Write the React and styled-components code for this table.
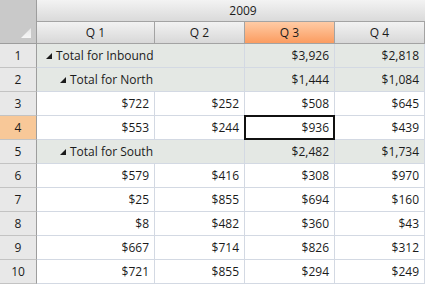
import React from "react";
import styled, { createGlobalStyle, css } from "styled-components";

const Global = createGlobalStyle`
  html, body { margin: 0; padding: 0; background: #ffffff; }
  body { font-family: "Open Sans", "Noto Sans", "Liberation Sans", sans-serif; }
`;

const Grid = styled.div`
  display: grid;
  grid-template-columns: 37px 118px 90px 90px 90px;
  grid-template-rows: 22px 22px repeat(10, 24px);
  width: 425px;
  height: 284px;
  overflow: hidden;
  font-size: 12px;
  color: #1b1b1b;
`;

const Corner = styled.div`
  grid-row: 1 / span 2;
  grid-column: 1;
  background: #c9c9c9;
  border-right: 1px solid #9d9d9d;
  border-bottom: 1px solid #9d9d9d;
  display: flex;
  align-items: flex-end;
  justify-content: flex-end;
  padding: 0 5px 5px 0;
`;

const headerBase = css`
  display: flex;
  align-items: center;
  justify-content: center;
  border-bottom: 1px solid #a3a3a3;
  white-space: nowrap;
`;

const YearHeader = styled.div`
  ${headerBase};
  grid-column: 2 / span 4;
  background: linear-gradient(#f3f3f3, #dadada);
  padding-left: 24px;
`;

const QHeader = styled.div`
  ${headerBase};
  border-right: 1px solid #a3a3a3;
  background: ${(p) =>
    p.$active
      ? "linear-gradient(#ffcba5, #fb9c60)"
      : "linear-gradient(#f2f2f2, #d8d8d8)"};
`;

const RowHeader = styled.div`
  display: flex;
  align-items: center;
  justify-content: center;
  background: ${(p) => (p.$active ? "#f8c898" : "#e8e8e8")};
  border-right: 1px solid #9d9d9d;
  border-bottom: 1px solid #c3c3c3;
`;

const Cell = styled.div`
  position: relative;
  display: flex;
  align-items: center;
  justify-content: flex-end;
  padding-right: 5px;
  background: ${(p) => (p.$total ? "#e4e8e4" : "#ffffff")};
  border-right: 1px solid #d3d9e3;
  border-bottom: 1px solid #d3d9e3;
  white-space: nowrap;
`;

const LabelCell = styled.div`
  grid-column: span 2;
  display: flex;
  align-items: center;
  gap: 4px;
  padding-left: ${(p) => 9 + p.$level * 14}px;
  background: #e4e8e4;
  border-right: 1px solid #d3d9e3;
  border-bottom: 1px solid #d3d9e3;
  white-space: nowrap;
  overflow: hidden;
`;

const Selection = styled.div`
  position: absolute;
  left: -1px;
  top: -1px;
  right: -1px;
  bottom: -1px;
  border: 2px solid #111;
  pointer-events: none;
`;

const Expander = () => (
  <svg width="6" height="6" viewBox="0 0 6 6">
    <polygon points="6,0 6,6 0,6" fill="#1b1b1b" />
  </svg>
);

const CornerMark = () => (
  <svg width="10" height="10" viewBox="0 0 10 10">
    <defs>
      <linearGradient id="cm" x1="0" y1="0" x2="0" y2="1">
        <stop offset="0" stopColor="#e6e6e6" />
        <stop offset="1" stopColor="#f6f6f6" />
      </linearGradient>
    </defs>
    <polygon points="10,0 10,10 0,10" fill="url(#cm)" />
  </svg>
);

const rows = [
  { label: "Total for Inbound", level: 0, q3: "$3,926", q4: "$2,818" },
  { label: "Total for North", level: 1, q3: "$1,444", q4: "$1,084" },
  { v: ["$722", "$252", "$508", "$645"] },
  { v: ["$553", "$244", "$936", "$439"], sel: 2 },
  { label: "Total for South", level: 1, q3: "$2,482", q4: "$1,734" },
  { v: ["$579", "$416", "$308", "$970"] },
  { v: ["$25", "$855", "$694", "$160"] },
  { v: ["$8", "$482", "$360", "$43"] },
  { v: ["$667", "$714", "$826", "$312"] },
  { v: ["$721", "$855", "$294", "$249"] },
];

export default function App() {
  return (
    <>
      <Global />
      <Grid>
        <Corner>
          <CornerMark />
        </Corner>
        <YearHeader>2009</YearHeader>
        {["Q 1", "Q 2", "Q 3", "Q 4"].map((q, i) => (
          <QHeader key={q} $active={i === 2}>
            {q}
          </QHeader>
        ))}
        {rows.map((r, i) => (
          <React.Fragment key={i}>
            <RowHeader $active={r.sel !== undefined}>{i + 1}</RowHeader>
            {r.label ? (
              <>
                <LabelCell $level={r.level}>
                  <Expander />
                  <span>{r.label}</span>
                </LabelCell>
                <Cell $total>{r.q3}</Cell>
                <Cell $total>{r.q4}</Cell>
              </>
            ) : (
              r.v.map((val, j) => (
                <Cell key={j}>
                  {val}
                  {r.sel === j && <Selection />}
                </Cell>
              ))
            )}
          </React.Fragment>
        ))}
      </Grid>
    </>
  );
}
